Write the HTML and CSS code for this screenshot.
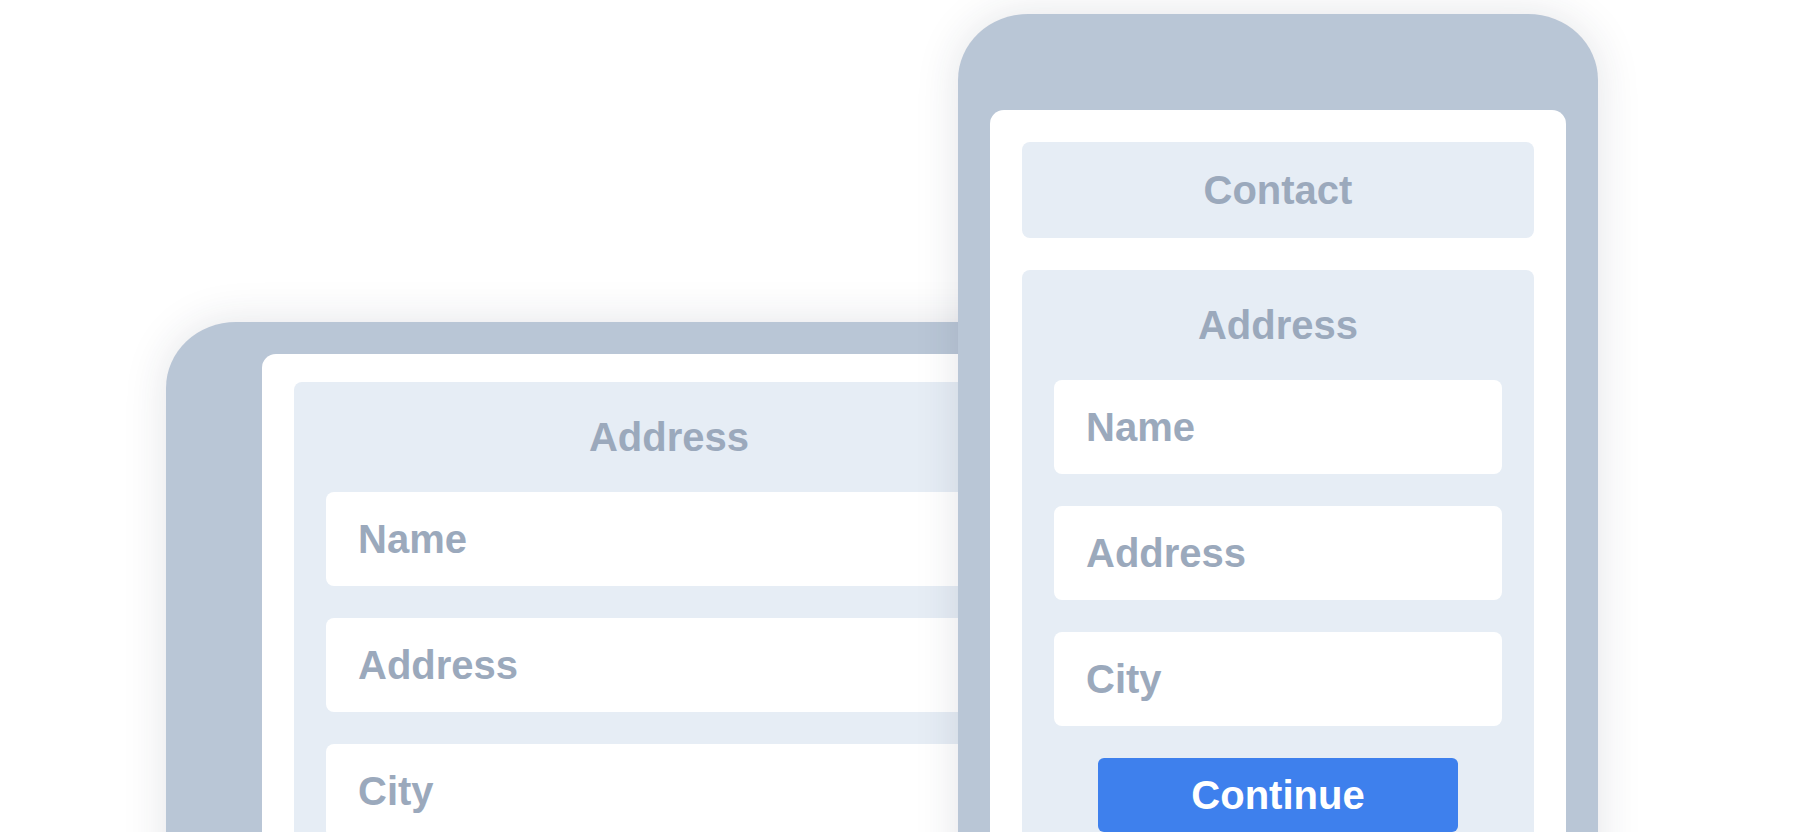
FILE: index.html
```html
<!DOCTYPE html>
<html lang="en">
<head>
<meta charset="utf-8">
<title>Responsive forms</title>
<link rel="stylesheet" href="styles.css">
</head>
<body>
<div class="stage">
  <div class="device tablet">
    <div class="screen">
      <section class="card form">
        <h2 class="card-title">Address</h2>
        <div class="field">Name</div>
        <div class="field">Address</div>
        <div class="field">City</div>
      </section>
    </div>
  </div>
  <div class="device phone">
    <div class="screen">
      <section class="card contact">Contact</section>
      <section class="card form">
        <h2 class="card-title">Address</h2>
        <div class="field">Name</div>
        <div class="field">Address</div>
        <div class="field">City</div>
        <button class="btn" type="button">Continue</button>
      </section>
    </div>
  </div>
</div>
</body>
</html>
```

FILE: styles.css
```css
* { box-sizing: border-box; }

html, body {
  margin: 0;
  padding: 0;
  background: #ffffff;
}

body {
  font-family: "Liberation Sans", Arial, Helvetica, sans-serif;
  font-weight: 700;
  color: #9ba9bc;
}

.stage {
  position: relative;
  width: 1800px;
  height: 832px;
  overflow: hidden;
  background: #ffffff;
}

.device {
  position: absolute;
  background: #b9c6d6;
  border-radius: 70px 70px 0 0 / 66px 66px 0 0;
  box-shadow: 0 0 44px rgba(40, 50, 70, 0.13);
}

.tablet {
  left: 166px;
  top: 322px;
  width: 1006px;
  height: 760px;
  padding: 32px 96px 0;
}

.phone {
  left: 958px;
  top: 14px;
  width: 640px;
  height: 1100px;
  padding: 96px 32px 0;
}

.screen {
  background: #ffffff;
  border-radius: 14px;
  height: 100%;
  display: flex;
  flex-direction: column;
  gap: 32px;
}

.tablet .screen { padding: 28px 32px; }
.phone .screen { padding: 32px; }

.card {
  background: #e6edf5;
  border-radius: 8px;
}

.contact {
  height: 96px;
  display: flex;
  align-items: center;
  justify-content: center;
  font-size: 40px;
  line-height: 46px;
}

.form {
  padding: 32px;
  display: flex;
  flex-direction: column;
  gap: 32px;
}

.card-title {
  margin: 0;
  font-size: 40px;
  line-height: 46px;
  font-weight: 700;
  text-align: center;
}

.field {
  height: 94px;
  background: #ffffff;
  border-radius: 8px;
  padding: 0 32px;
  display: flex;
  align-items: center;
  font-size: 40px;
  line-height: 46px;
}

.btn {
  align-self: center;
  width: 360px;
  border: none;
  border-radius: 6px;
  background: #3e80ed;
  color: #ffffff;
  font-family: inherit;
  font-weight: 700;
  font-size: 40px;
  line-height: 46px;
  padding: 14px 0;
}
```
